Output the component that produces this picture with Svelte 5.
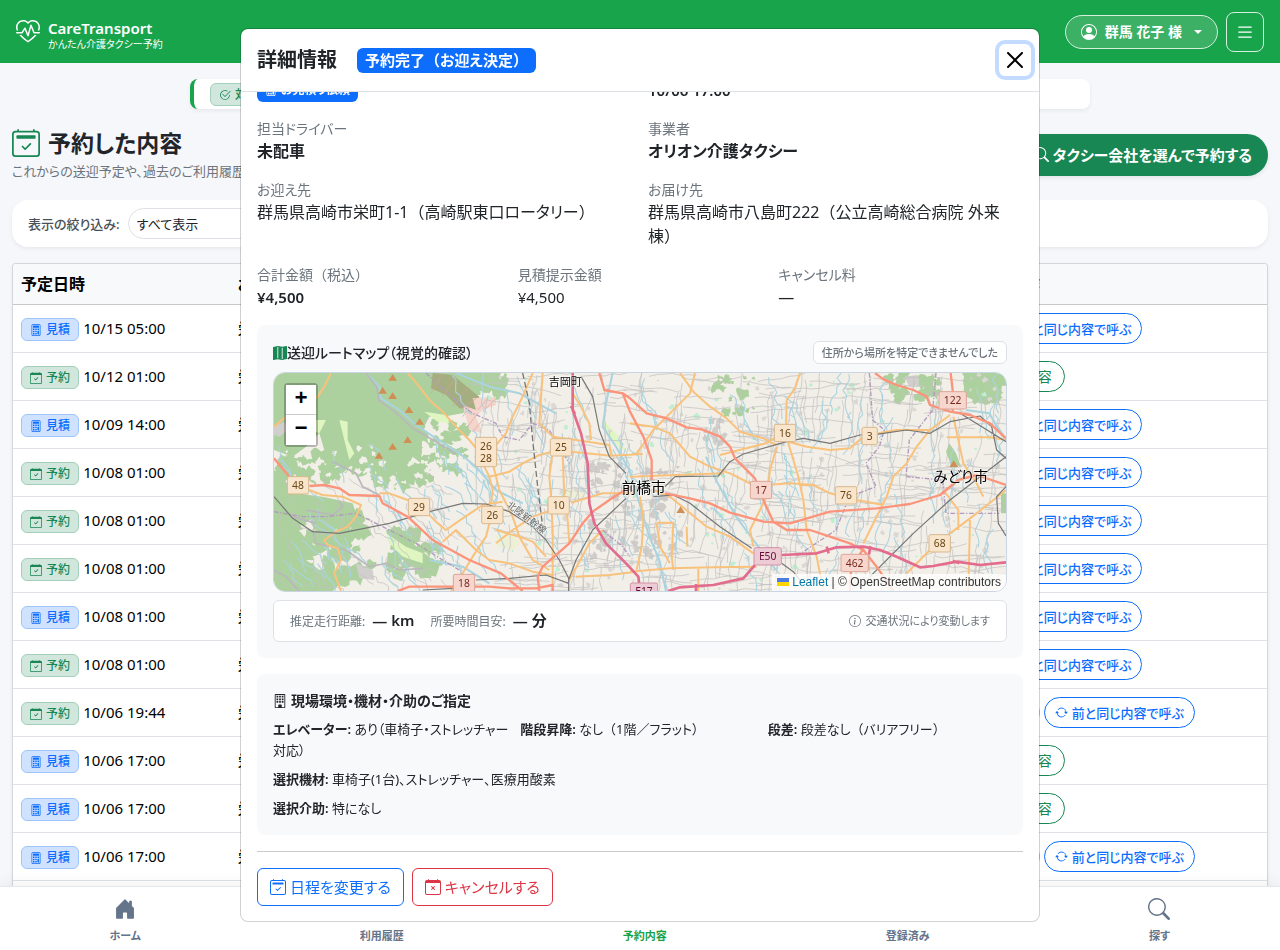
<script lang="ts">
	let filter = $state('all');
	let modalBody: HTMLElement;

	// open the modal at the actions on the bottom
	$effect(() => {
		modalBody.scrollTop = modalBody.scrollHeight;
	});

	const icons: Record<string, string> = {
		search:
			'M11.742 10.344a6.5 6.5 0 1 0-1.397 1.398h-.001q.044.06.098.115l3.85 3.85a1 1 0 0 0 1.415-1.414l-3.85-3.85a1 1 0 0 0-.115-.1zM12 6.5a5.5 5.5 0 1 1-11 0 5.5 5.5 0 0 1 11 0',
		person:
			'M11 6a3 3 0 1 1-6 0 3 3 0 0 1 6 0M0 8a8 8 0 1 1 16 0A8 8 0 0 1 0 8m8-7a7 7 0 0 0-5.468 11.37C3.242 11.226 4.805 10 8 10s4.757 1.225 5.468 2.37A7 7 0 0 0 8 1',
		list: 'M2.5 12a.5.5 0 0 1 .5-.5h10a.5.5 0 0 1 0 1H3a.5.5 0 0 1-.5-.5m0-4a.5.5 0 0 1 .5-.5h10a.5.5 0 0 1 0 1H3a.5.5 0 0 1-.5-.5m0-4a.5.5 0 0 1 .5-.5h10a.5.5 0 0 1 0 1H3a.5.5 0 0 1-.5-.5',
		heart:
			'm8 2.748-.717-.737C5.6.281 2.514.878 1.4 3.053.918 3.995.78 5.323 1.508 7H.43c-2.128-5.697 4.165-8.83 7.394-5.857q.09.083.176.171a3 3 0 0 1 .176-.17c3.23-2.974 9.522.159 7.394 5.856h-1.078c.728-1.677.59-3.005.108-3.947C13.486.878 10.4.28 8.717 2.01zM2.212 10h1.315C4.593 11.183 6.05 12.458 8 13.795c1.949-1.337 3.407-2.612 4.473-3.795h1.315c-1.265 1.566-3.14 3.25-5.788 5-2.648-1.75-4.523-3.434-5.788-5M10.464 3.314a.5.5 0 0 0-.945.049L7.921 8.956 6.464 5.314a.5.5 0 0 0-.88-.091L3.732 8H.5a.5.5 0 0 0 0 1H4a.5.5 0 0 0 .416-.223l1.473-2.209 1.647 4.118a.5.5 0 0 0 .945-.049l1.598-5.593 1.457 3.642A.5.5 0 0 0 12 9h3.5a.5.5 0 0 0 0-1h-3.162z',
		check:
			'M2.5 8a5.5 5.5 0 0 1 8.25-4.764.5.5 0 0 0 .5-.866A6.5 6.5 0 1 0 14.5 8a.5.5 0 0 0-1 0 5.5 5.5 0 1 1-11 0M15.354 3.354a.5.5 0 0 0-.708-.708L8 9.293 5.354 6.646a.5.5 0 1 0-.708.708l3 3a.5.5 0 0 0 .708 0z',
		calendar2:
			'M10.854 8.146a.5.5 0 0 1 0 .708l-3 3a.5.5 0 0 1-.708 0l-1.5-1.5a.5.5 0 0 1 .708-.708L7.5 10.793l2.646-2.647a.5.5 0 0 1 .708 0M3.5 0a.5.5 0 0 1 .5.5V1h8V.5a.5.5 0 0 1 1 0V1h1a2 2 0 0 1 2 2v11a2 2 0 0 1-2 2H2a2 2 0 0 1-2-2V3a2 2 0 0 1 2-2h1V.5a.5.5 0 0 1 .5-.5M2 2a1 1 0 0 0-1 1v11a1 1 0 0 0 1 1h12a1 1 0 0 0 1-1V3a1 1 0 0 0-1-1zM2.5 4a.5.5 0 0 1 .5-.5h10a.5.5 0 0 1 .5.5v1a.5.5 0 0 1-.5.5H3a.5.5 0 0 1-.5-.5z',
		calendar:
			'M10.854 7.146a.5.5 0 0 1 0 .708l-3 3a.5.5 0 0 1-.708 0l-1.5-1.5a.5.5 0 1 1 .708-.708L7.5 9.793l2.646-2.647a.5.5 0 0 1 .708 0M3.5 0a.5.5 0 0 1 .5.5V1h8V.5a.5.5 0 0 1 1 0V1h1a2 2 0 0 1 2 2v11a2 2 0 0 1-2 2H2a2 2 0 0 1-2-2V3a2 2 0 0 1 2-2h1V.5a.5.5 0 0 1 .5-.5M1 4v10a1 1 0 0 0 1 1h12a1 1 0 0 0 1-1V4z',
		calendarX:
			'M6.146 7.146a.5.5 0 0 1 .708 0L8 8.293l1.146-1.147a.5.5 0 1 1 .708.708L8.707 9l1.147 1.146a.5.5 0 0 1-.708.708L8 9.707l-1.146 1.147a.5.5 0 0 1-.708-.708L7.293 9 6.146 7.854a.5.5 0 0 1 0-.708M3.5 0a.5.5 0 0 1 .5.5V1h8V.5a.5.5 0 0 1 1 0V1h1a2 2 0 0 1 2 2v11a2 2 0 0 1-2 2H2a2 2 0 0 1-2-2V3a2 2 0 0 1 2-2h1V.5a.5.5 0 0 1 .5-.5M1 4v10a1 1 0 0 0 1 1h12a1 1 0 0 0 1-1V4z',
		calculator:
			'M4 0a2 2 0 0 0-2 2v12a2 2 0 0 0 2 2h8a2 2 0 0 0 2-2V2a2 2 0 0 0-2-2zM4 1h8a1 1 0 0 1 1 1v12a1 1 0 0 1-1 1H4a1 1 0 0 1-1-1V2a1 1 0 0 1 1-1M4 2.5a.5.5 0 0 1 .5-.5h7a.5.5 0 0 1 .5.5v2a.5.5 0 0 1-.5.5h-7a.5.5 0 0 1-.5-.5zM4 6h2v2H4zM7 6h2v2H7zM10 6h2v2h-2zM4 9h2v2H4zM7 9h2v2H7zM10 9h2v5h-2zM4 12h2v2H4zM7 12h2v2H7z',
		repeat:
			'M11.534 7h3.932a.25.25 0 0 1 .192.41l-1.966 2.36a.25.25 0 0 1-.384 0l-1.966-2.36a.25.25 0 0 1 .192-.41m-11 2h3.932a.25.25 0 0 0 .192-.41L2.692 6.23a.25.25 0 0 0-.384 0L.342 8.59A.25.25 0 0 0 .534 9M8 3c-1.552 0-2.94.707-3.857 1.818a.5.5 0 1 1-.771-.636A6.002 6.002 0 0 1 13.917 7H12.9A5 5 0 0 0 8 3M3.1 9a5.002 5.002 0 0 0 8.757 2.182.5.5 0 1 1 .771.636A6.002 6.002 0 0 1 2.083 9z',
		info: 'M8 15A7 7 0 1 1 8 1a7 7 0 0 1 0 14m0 1A8 8 0 1 0 8 0a8 8 0 0 0 0 16m.93-9.412-2.29.287-.082.38.45.083c.294.07.352.176.288.469l-.738 3.468c-.194.897.105 1.319.808 1.319.545 0 1.178-.252 1.465-.598l.088-.416c-.2.176-.492.246-.686.246-.275 0-.375-.193-.304-.533zM9 4.5a1 1 0 1 1-2 0 1 1 0 0 1 2 0',
		house:
			'M6.5 14.5v-3.505c0-.245.25-.495.5-.495h2c.25 0 .5.25.5.5v3.5a.5.5 0 0 0 .5.5h4a.5.5 0 0 0 .5-.5v-7a.5.5 0 0 0-.146-.354L13 5.793V2.5a.5.5 0 0 0-.5-.5h-1a.5.5 0 0 0-.5.5v1.293L8.354 1.146a.5.5 0 0 0-.708 0l-6 6A.5.5 0 0 0 1.5 7.5v7a.5.5 0 0 0 .5.5h4a.5.5 0 0 0 .5-.5',
		building:
			'M2 1a1 1 0 0 1 1-1h10a1 1 0 0 1 1 1v14a1 1 0 0 1-1 1H3a1 1 0 0 1-1-1zm11 0H3v14h3v-2.5a.5.5 0 0 1 .5-.5h3a.5.5 0 0 1 .5.5V15h3zM4 2h2v2H4zM7 2h2v2H7zM10 2h2v2h-2zM4 5h2v2H4zM7 5h2v2H7zM10 5h2v2h-2zM4 8h2v2H4zM7 8h2v2H7zM10 8h2v2h-2z',
		map: 'M16 .5a.5.5 0 0 0-.598-.49L10.5.99 5.598.01a.5.5 0 0 0-.196 0l-5 1A.5.5 0 0 0 0 1.5v14a.5.5 0 0 0 .598.49l4.902-.98 4.902.98a.5.5 0 0 0 .196 0l5-1A.5.5 0 0 0 16 14.5zM5 14.09V1.11l.5-.1.5.1v12.98l-.402-.08a.5.5 0 0 0-.196 0zm5 .8V1.91l.402.08a.5.5 0 0 0 .196 0L11 1.91v12.98l-.5.1z',
		close:
			'M.293.293a1 1 0 0 1 1.414 0L8 6.586 14.293.293a1 1 0 1 1 1.414 1.414L9.414 8l6.293 6.293a1 1 0 0 1-1.414 1.414L8 9.414l-6.293 6.293a1 1 0 0 1-1.414-1.414L6.586 8 .293 1.707a1 1 0 0 1 0-1.414'
	};

	const rows = [
		{ quote: true, date: '10/15 05:00', repeat: true },
		{ quote: false, date: '10/12 01:00' },
		{ quote: true, date: '10/09 14:00', repeat: true },
		{ quote: false, date: '10/08 01:00', repeat: true },
		{ quote: false, date: '10/08 01:00', repeat: true },
		{ quote: false, date: '10/08 01:00', repeat: true },
		{ quote: true, date: '10/08 01:00', repeat: true },
		{ quote: false, date: '10/08 01:00', repeat: true },
		{ quote: false, date: '10/06 19:44', review: true, repeat: true },
		{ quote: true, date: '10/06 17:00' },
		{ quote: true, date: '10/06 17:00' },
		{ quote: true, date: '10/06 17:00', review: true, repeat: true }
	];

	const tabs = [
		{ icon: 'house', label: 'ホーム' },
		{ icon: 'list', label: '利用履歴' },
		{ icon: 'calendar', label: '予約内容', active: true },
		{ icon: 'check', label: '登録済み' },
		{ icon: 'search', label: '探す' }
	];

	// ---- map drawing ----
	let seed = 11;
	function rnd() {
		seed = (seed * 16807) % 2147483647;
		return seed / 2147483647;
	}

	function wander(x: number, y: number, angle: number, steps: number, len: number, bend: number) {
		let d = `M${Math.round(x)} ${Math.round(y)}`;
		for (let i = 0; i < steps; i++) {
			const a = angle + (rnd() - 0.5) * bend;
			x += Math.cos(a) * len;
			y += Math.sin(a) * len;
			d += `L${Math.round(x)} ${Math.round(y)}`;
		}
		return d;
	}

	function blob(x: number, y: number, r: number) {
		let d = '';
		for (let i = 0; i < 13; i++) {
			const a = (i / 13) * Math.PI * 2;
			const q = r * (0.45 + rnd() * 0.75);
			d += `${i ? 'L' : 'M'}${Math.round(x + Math.cos(a) * q)} ${Math.round(y + Math.sin(a) * q)}`;
		}
		return d + 'Z';
	}

	function many(n: number, make: () => string) {
		return Array.from({ length: n }, make).join('');
	}

	const lanes =
		many(230, () => wander(660 + rnd() * 1580, 110 + rnd() * 640, 1.5 + rnd() * 0.3, 6, 22, 0.6)) +
		many(230, () => wander(640 + rnd() * 1580, 130 + rnd() * 650, rnd() * 0.25 - 0.1, 6, 24, 0.5)) +
		many(50, () => wander(60 + rnd() * 560, 420 + rnd() * 340, 0.4 + rnd(), 7, 17, 1.6));
	const streams =
		many(75, () => wander(560 + rnd() * 1080, 110 + rnd() * 560, 1.25, 8, 18, 1.5)) +
		many(34, () => wander(1650 + rnd() * 600, 110 + rnd() * 560, 1.6, 8, 18, 1.5)) +
		many(44, () => wander(60 + rnd() * 580, 320 + rnd() * 400, 1, 6, 18, 1.5));
	const blocks = many(210, () => blob(700 + rnd() * 1540, 130 + rnd() * 650, 3 + rnd() * 7));
	const cityBlocks =
		many(60, () => blob(1000 + rnd() * 270, 400 + rnd() * 290, 6 + rnd() * 11)) +
		many(16, () => blob(1345 + rnd() * 70, 270 + rnd() * 110, 5 + rnd() * 9));
	const woods =
		many(80, () => blob(60 + rnd() * 460, 370 + rnd() * 90, 10 + rnd() * 20)) +
		many(56, () => blob(60 + rnd() * 290, 560 + rnd() * 220, 10 + rnd() * 26)) +
		many(24, () => blob(400 + rnd() * 150, 600 + rnd() * 130, 9 + rnd() * 18)) +
		many(36, () => blob(480 + rnd() * 150, 270 + rnd() * 150, 7 + rnd() * 15)) +
		many(24, () => blob(640 + rnd() * 110, 135 + rnd() * 60, 7 + rnd() * 14)) +
		many(26, () => blob(1370 + rnd() * 130, 140 + rnd() * 110, 5 + rnd() * 12)) +
		many(30, () => blob(1890 + rnd() * 160, 135 + rnd() * 70, 7 + rnd() * 16)) +
		many(16, () => blob(2130 + rnd() * 120, 130 + rnd() * 80, 14 + rnd() * 22));
	const clearings = many(44, () => blob(60 + rnd() * 500, 350 + rnd() * 130, 4 + rnd() * 11));
	const parks = many(70, () => blob(650 + rnd() * 1590, 140 + rnd() * 640, 3 + rnd() * 7));

	const secondary = [
		'M225 129L205 170 185 200 150 220 90 260 54 290',
		'M455 129L490 170 520 210 560 245 600 290 640 330 665 360 680 400 700 440 710 480 705 520',
		'M160 480L200 495 260 500 315 525 300 560 275 590 240 605 205 630 215 645 245 655 255 690 235 730 255 783',
		'M370 490L400 490 455 510 510 545 545 580 570 600 620 565 680 525 740 515',
		'M830 129L800 200 770 260 750 310 720 345',
		'M860 129L850 280 890 320 960 330 1060 345 1065 375',
		'M950 190L975 230 1000 280 1005 330',
		'M700 440L760 425 800 400 850 375 890 365',
		'M890 365L880 440 885 500 890 600 890 783M920 375L925 500 935 570 940 640',
		'M710 400L730 480 770 560 790 620 830 690 880 720',
		'M585 783L620 730 650 680 690 620 705 560M720 640L770 600 830 560 890 540',
		'M560 635L600 600 660 660 700 690 760 700 830 725 890 735',
		'M720 600L790 620 830 635 870 680 M935 760L1000 640 1040 600',
		'M945 365L1065 377 1160 372M945 518L1040 490 1130 490M960 740L1060 735 1140 725',
		'M1272 129L1312 185 1362 230 1412 265 1452 305 1522 325 1562 345',
		'M1317 129L1302 190 1242 250 1192 300 1142 370 1122 375',
		'M1122 280L1192 290 1242 310 1272 345 1302 380 1362 410 1422 430 1492 465',
		'M1632 129L1617 175 1592 210 1590 300 1597 340 1612 390 1627 440 1642 510 1652 600 1682 680 1702 783',
		'M1562 350L1542 420 1532 500 1502 560 1482 600 1492 650',
		'M1532 465L1602 460 1672 465 1722 490 1802 510 1882 525',
		'M1597 335L1652 350 1722 360 1782 355 1822 320',
		'M1867 310L1922 300 2022 300 2082 255',
		'M2022 300L1982 350 1952 400 1912 440 1892 500 1872 540 1822 640',
		'M2092 260L2107 330 2122 400 2162 460 2182 500',
		'M2072 322L2202 322 2250 330M2062 480L2107 540 2107 600M2082 610L2162 550 2250 480M2022 660L1952 730',
		'M1122 725L1242 715 1372 712 1502 710M1202 578L1252 578 1247 680 1252 720M1292 590L1294 650',
		'M2142 570L2137 783M1202 580L1212 650 1242 700M1327 715L1327 783',
		'M1192 480L1242 500 1352 590 1422 620 1492 670M1122 440L1402 430',
		'M1152 500L1162 570 1157 650 1142 720',
		'M1392 375L1450 360 1530 340 1562 320'
	].join('');

	const primary = [
		'M54 385L100 440M160 468L205 465 250 475 280 495 370 498 380 520 455 560 530 630 640 690 735 730 800 783',
		'M425 783L460 770 580 770 700 770 760 775 840 775 890 765 890 783',
		'M1122 470L1060 510 1010 545 980 580 940 640 860 710 845 740 850 783',
		'M1030 129L1045 180 1100 190 1122 205 1172 250 1232 265 1292 292 1337 298 1392 320 1422 350 1437 385 1497 445 1517 500 1552 575 1592 600 1662 600 1722 620 1782 640 1822 660 1862 710 1912 783',
		'M1100 190L1122 245 1162 320 1187 390 1187 450',
		'M1227 490L1302 505 1362 520 1422 548 1522 575 1602 580 1722 545 1862 535 1962 522 2052 495 2107 450 2162 435 2250 465',
		'M1857 129L1882 148 1922 165 1972 180 2012 200 2022 225 2082 245 2142 255 2202 280 2250 325',
		'M2084 129L2090 180 2090 245M1782 783L1785 720 1822 655'
	].join('');

	const motorway =
		'M950 129L950 240 975 310 995 400 1000 520 1015 580 1050 640 1110 700 1147 740 1152 783M1237 783L1272 772 1372 765 1462 745 1497 705M1577 675L1682 670 1742 652 1822 650 1872 660 1922 680 1992 712 2032 708 2102 695 2172 705 2250 697M945 228l12 24M1320 762v22M1712 650l6 20M1843 648l-4 26M2090 692l20 8';

	const rails = [
		'M54 500L110 565 170 605 250 610 400 580 520 545 620 520 690 522 760 545 830 590 870 630 910 690 938 745 938 783',
		'M975 140L1010 200 1030 300 1060 380 1110 430M1110 505L1010 600 960 690 938 750',
		'M660 750L760 745 870 735 938 760M500 780L590 775',
		'M1192 500L1252 495 1302 520 1392 590 1487 655M1577 700L1612 725 1640 760',
		'M1227 470L1257 440 1387 438 1422 395 1462 372 1592 335 1642 325 1722 340 1812 315 1862 313 1952 300 2022 310 2082 275 2172 258 2207 290 2222 360 2250 385',
		'M1842 740L1972 610 2082 510 2250 380M2250 470L2222 500 2227 580 2250 618M2112 250L2250 335'
	].join('');

	const borders =
		'M510 129L560 175 610 220 650 250 720 280 740 320 790 330 830 280 880 300 940 400M54 545L140 560 210 560 300 550 400 600 480 640 560 690 610 720M1840 129L1850 270 1885 300 1870 350 1830 400 1860 470 1780 500 1740 600 1620 680M2040 129L2030 240 1960 330 1950 440 2060 450 2070 550 2230 550M1040 600L1100 650 1122 680';

	const shields = [
		{ x: 690, y: 366, lines: ['26', '28'] },
		{ x: 915, y: 352, lines: ['25'] },
		{ x: 126, y: 466, lines: ['48'] },
		{ x: 489, y: 531, lines: ['29'] },
		{ x: 709, y: 555, lines: ['26'] },
		{ x: 908, y: 526, lines: ['10'] },
		{ x: 624, y: 759, lines: ['18'], kind: 'pri' },
		{ x: 2090, y: 211, lines: ['122'], kind: 'pri' },
		{ x: 1587, y: 309, lines: ['16'] },
		{ x: 1841, y: 318, lines: ['3'] },
		{ x: 1515, y: 480, lines: ['17'], kind: 'pri' },
		{ x: 1770, y: 496, lines: ['76'] },
		{ x: 2051, y: 640, lines: ['68'] },
		{ x: 1535, y: 679, lines: ['E50'], kind: 'mot' },
		{ x: 1796, y: 699, lines: ['462'], kind: 'pri' },
		{ x: 1164, y: 785, lines: ['E17'], kind: 'mot' }
	].map((s) => ({ ...s, w: 28 + s.lines[0].length * 18, h: 16 + s.lines.length * 36 }));

	const peaks = [
		[410, 143],
		[380, 182],
		[410, 198],
		[459, 240],
		[491, 275],
		[455, 330],
		[410, 350],
		[369, 377],
		[1274, 540],
		[2093, 402]
	];
</script>

<svelte:head>
	<title>CareTransport</title>
</svelte:head>

{#snippet icon(name: string)}
	<svg class="icon" viewBox="0 0 16 16" aria-hidden="true"><path d={icons[name]} /></svg>
{/snippet}

<!-- kana are set proportionally, the brackets keep their full width -->
{#snippet paren(text: string)}<span class="full">（</span>{text}<span class="full">）</span>{/snippet}

<div class="page">
	<header class="topbar">
		<a class="brand" href="#home">
			{@render icon('heart')}
			<span class="brand-text">
				<strong>CareTransport</strong>
				<small>かんたん介護タクシー予約</small>
			</span>
		</a>
		<div class="topbar-actions">
			<button class="user" type="button">
				{@render icon('person')}
				<span>群馬 花子 様</span>
				<span class="caret"></span>
			</button>
			<button class="menu" type="button" aria-label="メニュー">{@render icon('list')}</button>
		</div>
	</header>

	<main>
		<div class="notice">
			<span class="tag green">{@render icon('check')} 対応完了</span>
		</div>

		<div class="heading">
			<div>
				<h1>{@render icon('calendar2')} 予約した内容</h1>
				<p>これからの送迎予定や、過去のご利用履歴</p>
			</div>
			<button class="search" type="button">{@render icon('search')} タクシー会社を選んで予約する</button>
		</div>

		<div class="filter">
			<label for="filter">表示の絞り込み:</label>
			<select id="filter" bind:value={filter}>
				<option value="all">すべて表示</option>
				<option value="quote">見積</option>
				<option value="reserve">予約</option>
			</select>
		</div>

		<div class="table-box">
			<table>
				<thead>
					<tr>
						<th class="col-date">予定日時</th>
						<th>お迎え先</th>
						<th class="col-actions">操作</th>
					</tr>
				</thead>
				<tbody>
					{#each rows as row}
						<tr>
							<td>
								<span class="tag" class:blue={row.quote} class:green={!row.quote}>
									{@render icon(row.quote ? 'calculator' : 'calendar')}
									{row.quote ? '見積' : '予約'}
								</span>
								<span class="date">{row.date}</span>
							</td>
							<td>栄町</td>
							<td class="col-actions">
								<div class="actions">
									<button class="pill green-line" type="button">予約内容</button>
									{#if row.review}
										<button class="pill yellow" type="button">口コミ投稿</button>
									{/if}
									{#if row.repeat}
										<button class="pill blue-line" type="button">
											{@render icon('repeat')} 前と同じ内容で呼ぶ
										</button>
									{/if}
								</div>
							</td>
						</tr>
					{/each}
				</tbody>
			</table>
		</div>
	</main>

	<nav class="tabs">
		{#each tabs as tab}
			<a href="#{tab.icon}" class:active={tab.active}>
				{@render icon(tab.icon)}
				<span>{tab.label}</span>
			</a>
		{/each}
	</nav>
</div>

<div class="modal-wrap">
	<div class="modal" role="dialog" aria-labelledby="modal-title">
		<div class="modal-head">
			<h2 id="modal-title">詳細情報</h2>
			<span class="status">予約完了{@render paren('お迎え決定')}</span>
			<button class="close" type="button" aria-label="閉じる">{@render icon('close')}</button>
		</div>

		<div class="modal-body" bind:this={modalBody}>
			<div class="grid two">
				<div>
					<div class="label">種別</div>
					<div class="value"><span class="kind">{@render icon('calculator')} お見積り依頼</span></div>
				</div>
				<div>
					<div class="label">予定日時</div>
					<div class="value strong num">10/06 17:00</div>
				</div>
				<div>
					<div class="label">担当ドライバー</div>
					<div class="value strong">未配車</div>
				</div>
				<div>
					<div class="label">事業者</div>
					<div class="value strong">オリオン介護タクシー</div>
				</div>
				<div>
					<div class="label">お迎え先</div>
					<div class="value">群馬県高崎市栄町1-1{@render paren('高崎駅東口ロータリー')}</div>
				</div>
				<div>
					<div class="label">お届け先</div>
					<div class="value">群馬県高崎市八島町222{@render paren('公立高崎総合病院 外来棟')}</div>
				</div>
			</div>

			<div class="grid three">
				<div>
					<div class="label">合計金額{@render paren('税込')}</div>
					<div class="value strong num">¥4,500</div>
				</div>
				<div>
					<div class="label">見積提示金額</div>
					<div class="value num">¥4,500</div>
				</div>
				<div>
					<div class="label">キャンセル料</div>
					<div class="value">—</div>
				</div>
			</div>

			<section class="panel">
				<div class="map-head">
					<h3>
						<span class="map-icon">{@render icon('map')}</span>
						<span>送迎ルートマップ（視覚的確認）</span>
					</h3>
					<span class="map-note">住所から場所を特定できませんでした</span>
				</div>

				<div class="map">
					<svg class="tiles" viewBox="54 129 2196 654" preserveAspectRatio="xMidYMid slice">
						<rect x="54" y="129" width="2196" height="654" fill="#f2efe9" />
						<g fill="#add19e">
							<path
								d="M54 129H735L720 165 700 190 660 180 640 240 620 250 560 260 520 260 500 300 495 400 470 380 440 440 410 420 370 450 350 400 320 430 290 400 260 430 230 370 205 360 190 310 150 350 110 380 54 360Z"
							/>
							<path
								d="M54 420L90 440 120 490 200 500 290 520 300 550 240 590 170 600 180 560 120 590 170 650 150 690 190 720 230 710 230 783H54Z"
							/>
							<path d="M390 600L430 590 470 640 530 690 550 710 540 740 500 730 440 690 420 650 400 640Z" />
							<path d="M2120 150L2170 129 2240 135 2235 200 2190 225 2130 200Z" />
							<path d="M2235 490h15v60h-15zM2080 340l20 30 15 40-30-5-15-40z" />
							<path d={woods} />
						</g>
						<path d={clearings} fill="#f2efe9" />
						<path
							d="M250 270L275 275 275 330 295 370 280 390 265 330ZM505 245L570 255 580 280 545 275ZM390 610L450 650 500 670 500 700 440 680 400 640ZM175 270L210 270 190 310 170 300ZM1040 270L1080 310 1115 370 1090 350 1050 310Z"
							fill="#dff6c0"
						/>
						<path d="M530 129L590 135 670 200 665 240 610 235 570 195 525 175Z" fill="#a5ae80" />
						<path d="M650 205L720 200 720 225 680 240 660 260 680 310 640 300 620 225 660 240Z" fill="#f4d5cb" />
						<path
							d="M640 230l-20 30M665 250l-30 40M680 270l-30 35M700 200l-35 40M720 205l-40 40M560 130l-35 60M600 140l-40 60M640 170l-50 60M668 200l-50 35"
							stroke="#d9a09a"
							stroke-width="2"
						/>
						<path d="M54 290L85 275 95 300 70 320 54 315ZM300 700L350 720 355 750 310 745ZM1945 140L1985 135 1990 165 1960 170Z" fill="#d0cfcd" />
						<path d="M720 615L770 610 795 640 770 660 725 650ZM930 475L990 480 980 505 930 500Z" fill="#eef0d5" />
						<path d={blocks} fill="#dad8d4" />
						<path d={cityBlocks} fill="#cfcdca" />
						<path d={parks} fill="#bfeed0" />
						<path d={lanes} class="line" stroke="#c3c1c0" stroke-width="2.2" />
						<path d={streams} class="line" stroke="#aad3df" stroke-width="3.2" />
						<path
							d="M330 129L370 170 375 205 430 240 480 285 540 325 610 370 660 410 720 480 800 520 M1070 129L1050 220 1040 290 1080 350 1120 420 1150 520 1180 620 1210 690 1230 783M600 129L700 170 790 190 900 250M2130 240L2200 250 2240 320M1350 380L1380 450 1440 560 1500 640 1560 720M520 690L620 710 700 760"
							class="line"
							stroke="#aad3df"
							stroke-width="6"
						/>
						<path
							d="M330 129L362 170 368 210 420 248 470 295 540 335 600 372M230 395L300 430 320 470 370 495M150 540L230 555 260 530 250 515M170 600L180 640 270 660 340 710 390 700 430 720 500 715M54 720L90 740 130 783M110 560L180 580"
							class="line"
							stroke="#b9b7bd"
							stroke-width="5"
						/>
						<path d={borders} class="line" stroke="#b29abf" stroke-width="4" stroke-dasharray="14 5 4 5" />
						<path d={secondary} class="line" stroke="#f9c27c" stroke-width="6" />
						<path d={rails} class="line" stroke="#777" stroke-width="3.6" />
						<path d="M800 129L820 220 830 330 845 470 860 590" class="line" stroke="#777" stroke-width="4" stroke-dasharray="18 9" />
						<path d={primary} class="line" stroke="#fb947b" stroke-width="7" />
						<path d={motorway} class="line" stroke="#e36c8c" stroke-width="8" />
						{#each peaks as [x, y]}
							<path d="M{x} {y - 11}l13 20h-26z" fill="#d08f55" />
						{/each}
						{#each shields as s}
							<g class="shield {s.kind ?? 'sec'}">
								<rect x={s.x - s.w / 2} y={s.y - s.h / 2} width={s.w} height={s.h} rx="5" />
								{#each s.lines as line, i}
									<text x={s.x} y={s.y + 11 + (i - (s.lines.length - 1) / 2) * 36}>{line}</text>
								{/each}
							</g>
						{/each}
						<g class="place">
							<text x="928" y="168" font-size="33">吉岡町</text>
							<text x="1163" y="489" font-size="44">前橋市</text>
							<text x="2114" y="457" font-size="44">みどり市</text>
							<text x="812" y="572" font-size="28" fill="#666" transform="rotate(37 812 562)">北陸新幹線</text>
						</g>
					</svg>
					<div class="zoom">
						<button type="button" aria-label="拡大">+</button>
						<button type="button" aria-label="縮小">−</button>
					</div>
					<div class="credit">
						<svg viewBox="0 0 12 8" aria-hidden="true">
							<path fill="#4c7be1" d="M0 0h12v4H0z" />
							<path fill="#ffd500" d="M0 4h12v4H0z" />
						</svg>
						<a href="#leaflet">Leaflet</a> | © OpenStreetMap contributors
					</div>
				</div>

				<div class="route">
					<span>推定走行距離: <b>— km</b></span>
					<span>所要時間目安: <b>— 分</b></span>
					<span class="route-note">{@render icon('info')} 交通状況により変動します</span>
				</div>
			</section>

			<section class="panel">
				<h3>{@render icon('building')} 現場環境・機材・介助のご指定</h3>
				<div class="specs">
					<div><b>エレベーター:</b> あり（車椅子・ストレッチャー対応）</div>
					<div><b>階段昇降:</b> なし{@render paren('1階／フラット')}</div>
					<div><b>段差:</b> 段差なし{@render paren('バリアフリー')}</div>
					<div class="wide"><b>選択機材:</b> 車椅子(1台)、ストレッチャー、医療用酸素</div>
					<div class="wide"><b>選択介助:</b> 特になし</div>
				</div>
			</section>

			<div class="modal-actions">
				<button class="btn blue-line" type="button">{@render icon('calendar2')} 日程を変更する</button>
				<button class="btn red-line" type="button">{@render icon('calendarX')} キャンセルする</button>
			</div>
		</div>
	</div>
</div>

<style>
	:global(body) {
		margin: 0;
		background: #f5f7fb;
		color: #212529;
		font-family: 'Noto Sans', 'Noto Sans CJK JP', sans-serif;
		font-feature-settings: 'palt';
		font-size: 16px;
		line-height: 24px;
	}

	h1, h2, h3, p {
		margin: 0;
	}

	button, select {
		font: inherit;
		font-feature-settings: inherit;
		cursor: pointer;
	}

	.icon {
		width: 1em;
		height: 1em;
		flex: none;
		fill: currentColor;
		fill-rule: evenodd;
	}

	.full {
		font-feature-settings: normal;
	}

	.page {
		height: 100vh;
		display: flex;
		flex-direction: column;
		overflow: hidden;
	}

	.topbar {
		flex: none;
		display: flex;
		align-items: center;
		justify-content: space-between;
		height: 63px;
		padding: 0 16px;
		box-sizing: border-box;
		background: #18a44b;
		color: #fff;
	}

	.brand {
		display: flex;
		align-items: center;
		gap: 8px;
		color: inherit;
		text-decoration: none;
	}

	.brand > .icon {
		width: 24px;
		height: 24px;
	}

	.brand-text {
		display: flex;
		flex-direction: column;
		padding-top: 8px;
	}

	.brand strong {
		font-size: 15px;
		line-height: 16px;
		font-weight: 600;
	}

	.brand small {
		font-size: 10px;
		line-height: 16px;
	}

	.topbar-actions {
		display: flex;
		align-items: center;
		gap: 8px;
	}

	.user {
		display: flex;
		align-items: center;
		gap: 8px;
		height: 34px;
		padding: 0 15px;
		border: 1px solid #d6efde;
		border-radius: 17px;
		background: #3cb166;
		color: #fff;
		font-size: 14px;
		font-weight: 700;
	}

	.user .icon {
		width: 16px;
		height: 16px;
	}

	.caret {
		margin-left: 4px;
		border: 4px solid transparent;
		border-top-color: #fff;
		border-bottom: 0;
	}

	.menu {
		display: grid;
		place-items: center;
		width: 38px;
		height: 40px;
		border: 1px solid #d6efde;
		border-radius: 8px;
		background: none;
		color: #fff;
		font-size: 20px;
	}

	main {
		flex: 1;
		min-height: 0;
		display: flex;
		flex-direction: column;
		overflow: hidden;
		padding: 16px 12px 0;
	}

	.notice {
		width: 100%;
		max-width: 900px;
		box-sizing: border-box;
		margin: 0 auto;
		padding: 4px 0 3px 16px;
		display: flex;
		border-left: 4px solid #18a44b;
		border-radius: 8px;
		background: #fff;
		box-shadow: 0 2px 4px rgba(0, 0, 0, 0.06);
	}

	.tag {
		display: inline-flex;
		align-items: center;
		gap: 4px;
		height: 21px;
		padding: 0 8px;
		border: 1px solid;
		border-radius: 6px;
		font-size: 12px;
		font-weight: 500;
		line-height: 21px;
		vertical-align: middle;
	}

	.tag.blue {
		background: #cfe2ff;
		border-color: #9ec5fe;
		color: #0d6efd;
	}

	.tag.green {
		background: #d1e7dd;
		border-color: #a3cfbb;
		color: #198754;
	}

	.heading {
		display: flex;
		align-items: center;
		justify-content: space-between;
		margin-top: 18px;
	}

	h1 {
		display: flex;
		align-items: center;
		gap: 8px;
		font-size: 23px;
		line-height: 32px;
		font-weight: 600;
	}

	h1 .icon {
		width: 28px;
		height: 28px;
		color: #198754;
	}

	.heading p {
		margin-top: 2px;
		color: #6c757d;
		font-size: 13px;
		line-height: 21px;
	}

	.search {
		display: flex;
		align-items: center;
		gap: 4px;
		height: 42px;
		padding: 0 16px;
		border: 0;
		border-radius: 21px;
		background: #198754;
		color: #fff;
		font-size: 15px;
		font-weight: 600;
		box-shadow: 0 2px 4px rgba(0, 0, 0, 0.08);
	}

	.filter {
		display: flex;
		align-items: center;
		gap: 8px;
		margin-top: 18px;
		padding: 8px 16px;
		border-radius: 16px;
		background: #fff;
		box-shadow: 0 2px 4px rgba(0, 0, 0, 0.06);
		font-size: 13px;
	}

	.filter label {
		color: #495057;
		font-weight: 500;
	}

	.filter select {
		width: 180px;
		height: 31px;
		padding: 0 8px;
		appearance: none;
		border: 1px solid #dee2e6;
		border-radius: 16px;
		background: #fff;
		color: #212529;
	}

	.table-box {
		flex: 1;
		margin-top: 16px;
		border: 1px solid #d3d6da;
		border-bottom: 0;
		border-radius: 4px 4px 0 0;
		background: #fff;
		overflow: hidden;
		box-shadow: 0 2px 4px rgba(0, 0, 0, 0.06);
	}

	table {
		width: 100%;
		table-layout: fixed;
		border-collapse: collapse;
		color: #000;
	}

	th {
		height: 40px;
		padding: 0 8px;
		border-bottom: 1px solid #c6c7c8;
		background: #f8f9fa;
		text-align: left;
		font-weight: 600;
	}

	td {
		height: 47px;
		padding: 0 8px;
		border-bottom: 1px solid #dee2e6;
	}

	.col-date {
		width: 16%;
	}

	.col-actions {
		width: 37.5%;
		text-align: center;
	}

	.date, .num {
		font-size: 15px;
	}

	.actions {
		display: flex;
		justify-content: center;
		gap: 4px;
	}

	.pill {
		display: flex;
		align-items: center;
		gap: 4px;
		height: 31px;
		padding: 0 12px;
		border: 1px solid;
		border-radius: 16px;
		background: #fff;
		font-size: 14px;
		white-space: nowrap;
	}

	.pill.blue-line {
		padding: 0 10px;
		font-size: 13px;
		font-weight: 500;
	}

	.blue-line {
		border-color: #0d6efd;
		color: #0d6efd;
	}

	.green-line {
		border-color: #198754;
		color: #198754;
	}

	.red-line {
		border-color: #dc3545;
		color: #dc3545;
	}

	.pill.yellow {
		padding: 0 16px;
		background: #ffc107;
		border-color: #ffc107;
		color: #000;
	}

	.tabs {
		flex: none;
		display: flex;
		justify-content: space-around;
		height: 64px;
		box-sizing: border-box;
		padding-top: 11px;
		border-top: 1px solid #e2e8f0;
		background: #fff;
		box-shadow: 0 -4px 12px rgba(0, 0, 0, 0.05);
		z-index: 1;
	}

	.tabs a {
		display: flex;
		flex-direction: column;
		align-items: center;
		gap: 8px;
		color: #64748b;
		text-decoration: none;
		font-size: 11px;
		font-weight: 600;
		line-height: 16px;
	}

	.tabs .icon {
		width: 22px;
		height: 22px;
	}

	.tabs .active {
		color: #16a34a;
	}

	.modal-wrap {
		position: fixed;
		inset: 0;
		z-index: 10;
		display: flex;
		justify-content: center;
		padding: 28px 16px;
		pointer-events: none;
	}

	.modal {
		display: flex;
		flex-direction: column;
		width: 100%;
		max-width: 800px;
		box-sizing: border-box;
		border: 1px solid rgba(0, 0, 0, 0.175);
		border-radius: 8px;
		background: #fff;
		background-clip: padding-box;
		overflow: hidden;
		pointer-events: auto;
	}

	.modal-head {
		flex: none;
		display: flex;
		align-items: center;
		height: 62px;
		padding: 0 8px 0 16px;
		border-bottom: 1px solid #dee2e6;
	}

	.modal-head h2 {
		font-size: 20px;
		line-height: 30px;
		font-weight: 600;
	}

	.status {
		margin-left: 20px;
		padding: 0 8px;
		border-radius: 6px;
		background: #0d6efd;
		color: #fff;
		font-size: 15px;
		line-height: 25px;
		font-weight: 700;
	}

	.close {
		display: grid;
		place-items: center;
		width: 32px;
		height: 32px;
		margin-left: auto;
		padding: 0;
		border: 0;
		border-radius: 6px;
		background: #fff;
		color: #000;
		box-shadow: 0 0 0 4px #c2dbfe;
	}

	.modal-body {
		flex: 1;
		min-height: 0;
		padding: 16px 16px 15px;
		overflow-y: auto;
		scrollbar-width: none;
	}

	.grid {
		display: grid;
		gap: 16px;
		margin-bottom: 16px;
	}

	.two {
		grid-template-columns: 1fr 1fr;
	}

	.three {
		grid-template-columns: 1fr 1fr 1fr;
	}

	.label {
		color: #6c757d;
		font-size: 14px;
		line-height: 21px;
	}

	.strong {
		font-weight: 600;
	}

	.kind {
		display: inline-flex;
		align-items: center;
		gap: 4px;
		padding: 0 8px;
		border-radius: 6px;
		background: #0d6efd;
		color: #fff;
		font-size: 12px;
		line-height: 24px;
		font-weight: 700;
	}

	.panel {
		margin-bottom: 16px;
		padding: 16px;
		border-radius: 8px;
		background: #f8f9fb;
		font-size: 13px;
		line-height: 21px;
	}

	.panel h3 {
		display: flex;
		align-items: center;
		gap: 4px;
		font-size: 14px;
		line-height: 21px;
		font-weight: 600;
	}

	.map-head {
		display: flex;
		align-items: center;
		justify-content: space-between;
		margin-bottom: 8px;
	}

	.map-head h3 {
		gap: 0;
		font-weight: 500;
	}

	.map-icon {
		display: flex;
		color: #198754;
	}

	.map-note {
		padding: 0 8px;
		border: 1px solid #dee2e6;
		border-radius: 6px;
		background: #fff;
		color: #6c757d;
		font-size: 11px;
		font-weight: 500;
	}

	.map {
		position: relative;
		height: 218px;
		border: 1px solid #cbd5e1;
		border-radius: 12px;
		overflow: hidden;
	}

	.tiles {
		display: block;
		width: 100%;
		height: 100%;
	}

	.line {
		fill: none;
		stroke-linejoin: round;
	}

	.shield text {
		font-size: 31px;
		text-anchor: middle;
	}

	.shield rect {
		stroke-width: 3;
	}

	.sec rect {
		fill: #f8e5cb;
		stroke: #d8b88d;
	}

	.sec text {
		fill: #694415;
	}

	.pri rect {
		fill: #f6d6cd;
		stroke: #dda597;
	}

	.pri text {
		fill: #762a20;
	}

	.mot rect {
		fill: #edcbd4;
		stroke: #d292a5;
	}

	.mot text {
		fill: #650e37;
	}

	.place text {
		text-anchor: middle;
		paint-order: stroke;
		stroke: rgba(255, 255, 255, 0.6);
		stroke-width: 4;
	}

	.zoom {
		position: absolute;
		top: 10px;
		left: 10px;
		border: 2px solid rgba(0, 0, 0, 0.25);
		border-radius: 4px;
		background-clip: padding-box;
	}

	.zoom button {
		display: block;
		width: 30px;
		height: 30px;
		padding: 0;
		border: 0;
		background: #fff;
		color: #000;
		font: bold 22px/30px 'Liberation Mono', monospace;
	}

	.zoom button:first-child {
		box-sizing: border-box;
		border-bottom: 1px solid #ccc;
	}

	.credit {
		position: absolute;
		right: 0;
		bottom: 0;
		padding: 0 5px;
		background: rgba(255, 255, 255, 0.8);
		color: #333;
		font: 12px/17px 'Liberation Sans', sans-serif;
	}

	.credit svg {
		width: 12px;
		height: 8px;
	}

	.credit a {
		color: #0078a8;
		text-decoration: none;
	}

	.route {
		display: flex;
		align-items: center;
		gap: 16px;
		margin-top: 8px;
		padding: 8px 16px;
		border: 1px solid #dee2e6;
		border-radius: 6px;
		background: #fff;
		color: #6c757d;
		font-size: 12px;
		line-height: 22px;
	}

	.route b {
		margin-left: 4px;
		color: #212529;
		font-size: 15px;
		font-weight: 600;
	}

	.route-note {
		display: flex;
		align-items: center;
		gap: 4px;
		margin-left: auto;
		font-size: 11px;
	}

	.route-note .icon {
		width: 12px;
		height: 12px;
	}

	.specs {
		display: grid;
		grid-template-columns: 1fr 1fr 1fr;
		gap: 8px;
		margin-top: 8px;
	}

	.specs b {
		font-weight: 600;
	}

	.wide {
		grid-column: 1 / -1;
	}

	.modal-actions {
		display: flex;
		gap: 8px;
		padding-top: 16px;
		border-top: 1px solid #c8cacc;
	}

	.btn {
		display: flex;
		align-items: center;
		gap: 4px;
		height: 38px;
		padding: 0 12px;
		border: 1px solid;
		border-radius: 6px;
		background: #fff;
		font-size: 15px;
	}

	.btn .icon {
		width: 16px;
		height: 16px;
	}

	.btn.blue-line {
		border-color: #0d6efd;
	}

	.btn.red-line {
		border-color: #dc3545;
	}
</style>
